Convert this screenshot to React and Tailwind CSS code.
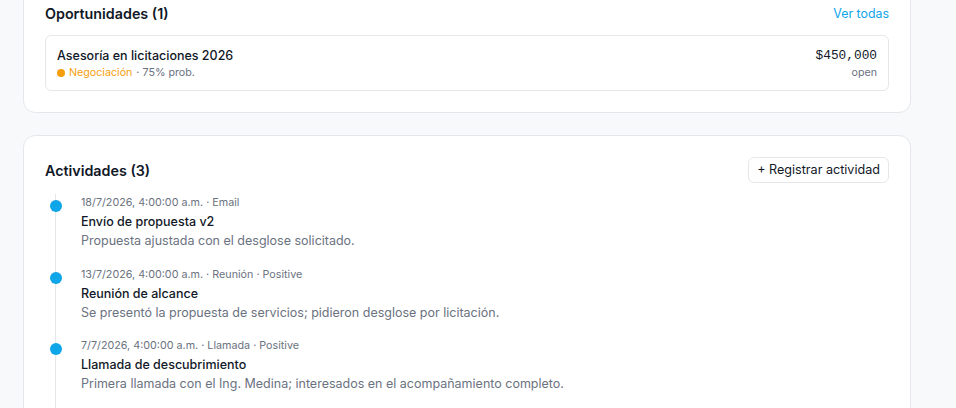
const activities = [
  {
    meta: '18/7/2026, 4:00:00 a.m. · Email',
    title: 'Envío de propuesta v2',
    desc: 'Propuesta ajustada con el desglose solicitado.',
  },
  {
    meta: '13/7/2026, 4:00:00 a.m. · Reunión · Positive',
    title: 'Reunión de alcance',
    desc: 'Se presentó la propuesta de servicios; pidieron desglose por licitación.',
  },
  {
    meta: '7/7/2026, 4:00:00 a.m. · Llamada · Positive',
    title: 'Llamada de descubrimiento',
    desc: 'Primera llamada con el Ing. Medina; interesados en el acompañamiento completo.',
  },
];

export default function App() {
  return (
    <div
      className="h-[408px] w-[956px] overflow-hidden bg-[#f8f9fb] text-[#111827]"
      style={{ fontFamily: 'Inter, "Noto Sans", sans-serif' }}
    >
      <div className="-mt-[19px] ml-[23px] flex w-[888px] flex-col gap-[22px]">
        {/* Oportunidades */}
        <section className="rounded-xl border border-[#e5e7eb] bg-white px-[21px] pb-[21px] pt-5">
          <div className="flex items-center justify-between">
            <h2 className="text-[14.3px] font-semibold leading-6">Oportunidades (1)</h2>
            <a className="text-[12.4px] text-[#0ea5e9]">Ver todas</a>
          </div>
          <div className="mt-[9px] flex items-center justify-between rounded-md border border-[#e5e7eb] px-[11px] pb-[9px] pt-[10px]">
            <div>
              <div className="text-[12.5px] font-medium leading-5">Asesoría en licitaciones 2026</div>
              <div className="-mt-[1px] flex items-center gap-1 text-[10.7px] leading-4 text-[#6b7280]">
                <span className="h-2 w-2 rounded-full bg-[#f59e0b]" />
                <span className="text-[#f59e0b]">Negociación</span>
                <span>· 75% prob.</span>
              </div>
            </div>
            <div className="text-right">
              <div className="text-[12.8px] leading-5" style={{ fontFamily: '"Liberation Mono", monospace' }}>
                $450,000
              </div>
              <div className="-mt-[1px] text-[10.7px] leading-4 text-[#6b7280]">open</div>
            </div>
          </div>
        </section>

        {/* Actividades */}
        <section className="rounded-xl border border-[#e5e7eb] bg-white px-[21px] pt-[21px]">
          <div className="flex items-center justify-between">
            <h2 className="pt-[1px] text-[14.3px] font-semibold leading-6">Actividades (3)</h2>
            <button className="rounded-md border border-[#e5e7eb] bg-white px-2 py-[4px] text-[12.6px] leading-4">
              + Registrar actividad
            </button>
          </div>
          <div className="ml-[10px] mt-[11px] border-l border-[#e5e7eb] pb-6 pt-[1px]">
            {activities.map((a) => (
              <div key={a.title} className="relative pb-[15.5px] pl-[25px]">
                <span className="absolute -left-[6.5px] top-[5px] h-3 w-3 rounded-full bg-[#0ea5e9]" />
                <div className="text-[10.75px] leading-4 text-[#6b7280]">{a.meta}</div>
                <div className="mt-[1px] text-[12.5px] font-medium leading-5">{a.title}</div>
                <div className="-mt-[1px] text-[12.5px] leading-5 text-[#6b7280]">{a.desc}</div>
              </div>
            ))}
          </div>
        </section>
      </div>
    </div>
  );
}
